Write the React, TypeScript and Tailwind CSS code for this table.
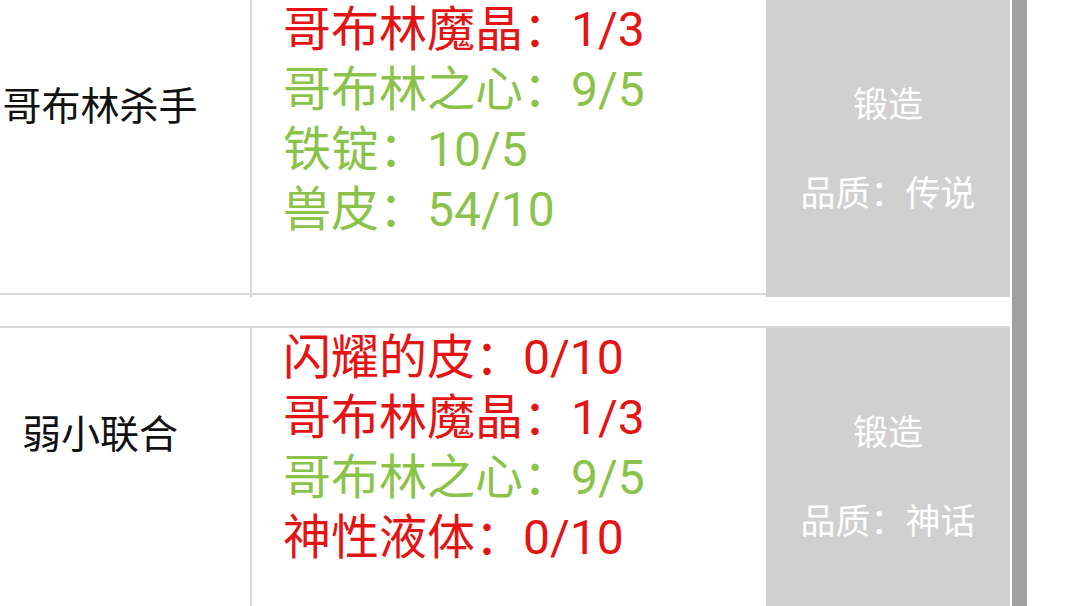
import React from "react";

type Mat = { name: string; have: number; need: number };
type Recipe = { id: string; name: string; mats: Mat[]; quality: string };

const recipes: Recipe[] = [
  {
    id: "goblin-slayer",
    name: "哥布林杀手",
    quality: "传说",
    mats: [
      { name: "哥布林魔晶", have: 1, need: 3 },
      { name: "哥布林之心", have: 9, need: 5 },
      { name: "铁锭", have: 10, need: 5 },
      { name: "兽皮", have: 54, need: 10 },
    ],
  },
  {
    id: "weak-union",
    name: "弱小联合",
    quality: "神话",
    mats: [
      { name: "闪耀的皮", have: 0, need: 10 },
      { name: "哥布林魔晶", have: 1, need: 3 },
      { name: "哥布林之心", have: 9, need: 5 },
      { name: "神性液体", have: 0, need: 10 },
    ],
  },
];

function RecipeRow({ r, first }: { r: Recipe; first?: boolean }) {
  return (
    <div className={`flex shrink-0 h-[297px] w-[1010px] border-y-2 border-[#d9d9d9] ${first ? "-mt-[2px]" : ""}`}>
      <div className="w-[252px] shrink-0 border-r-2 border-[#d9d9d9] -mb-[4px] pr-[50px] pt-[78px] text-center text-[39px] leading-[50px] text-[#111]">
        {r.name}
      </div>
      <div className="flex-1 pl-[31px] font-['Roboto','Noto_Sans_CJK_SC',sans-serif] text-[48px] leading-[60px]">
        {r.mats.map((m, i) => (
          <div key={i} className={m.have >= m.need ? "text-[#8bc34a]" : "text-[#e41414]"}>
            {m.name}：{m.have}/{m.need}
          </div>
        ))}
      </div>
      <button className="w-[244px] shrink-0 -mb-[4px] bg-[#d0d0d0] flex flex-col items-center pt-[77px] gap-[39px] text-[35px] leading-[50px] text-white">
        <span>锻造</span>
        <span>品质：{r.quality}</span>
      </button>
    </div>
  );
}

export default function App() {
  return (
    <div className="flex h-[606px] w-[1080px] overflow-hidden bg-white font-['Noto_Sans_CJK_SC',sans-serif]">
      <div className="flex flex-col gap-[31px]">
        {recipes.map((r, i) => (
          <RecipeRow key={r.id} r={r} first={i === 0} />
        ))}
      </div>
      <div className="ml-[2px] w-[15px] h-full bg-[#a0a0a0]" />
    </div>
  );
}
